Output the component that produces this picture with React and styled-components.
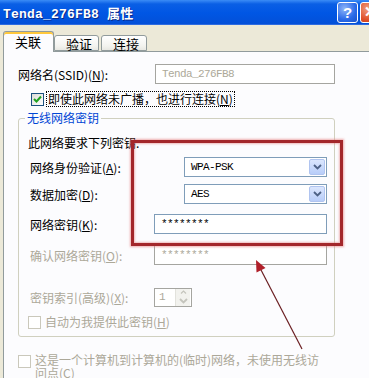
import React from 'react';
import styled, { createGlobalStyle } from 'styled-components';

const GlobalStyle = createGlobalStyle`
  html, body {
    margin: 0;
    padding: 0;
    background: #ece9d8;
    overflow: hidden;
  }
  body {
    font-family: "Noto Sans CJK SC", sans-serif;
    font-size: 12px;
    color: #000;
  }
`;

const Window = styled.div`
  position: relative;
  width: 382px;
  height: 378px;
  background: #ece9d8;
  overflow: hidden;
`;

const TitleBar = styled.div`
  height: 25px;
  display: flex;
  align-items: center;
  justify-content: space-between;
  background: linear-gradient(#3b8cf6 0, #0a5fe5 4px, #0056e4 55%, #0350d8 100%);
  border-bottom: 1px solid #2d6be0;
  box-sizing: border-box;
  padding-left: 3px;
`;

const Title = styled.div`
  color: #fff;
  font-weight: bold;
  font-size: 13px;
  font-family: "Liberation Mono", "Noto Sans CJK SC", monospace;
  text-shadow: 1px 1px 0 #0a2a8a;
  letter-spacing: 0.2px;
`;

const Caption = styled.div`
  display: flex;
  gap: 2px;
  margin-right: 1px;
`;

const CapButton = styled.div`
  width: 19px;
  height: 19px;
  border: 1px solid #fff;
  border-radius: 3px;
  display: flex;
  align-items: center;
  justify-content: center;
  color: #fff;
  font-weight: bold;
  font-size: 15px;
  font-family: "Liberation Sans", sans-serif;
  background: ${p => p.$close
    ? 'radial-gradient(circle at 35% 30%, #f0a080, #e0502a 60%, #c23a12)'
    : 'radial-gradient(circle at 35% 30%, #8fb6f8, #2a6ae8 60%, #1a52c8)'};
`;

const Body = styled.div`
  padding: 0 0 0 3px;
`;

const Tabs = styled.div`
  height: 26px;
  display: flex;
  align-items: flex-end;
`;

const Tab = styled.div`
  position: relative;
  z-index: ${p => (p.$active ? 2 : 1)};
  box-sizing: border-box;
  width: ${p => p.$w}px;
  margin-left: ${p => p.$ml || 0}px;
  height: ${p => (p.$active ? 21 : 16)}px;
  margin-bottom: ${p => (p.$active ? -1 : 0)}px;
  border: 1px solid #919b9c;
  border-bottom: ${p => (p.$active ? 'none' : '1px solid #919b9c')};
  border-radius: 3px 3px 0 0;
  background: ${p => (p.$active ? '#fcfcfe' : 'linear-gradient(#fff, #f3f3ef 70%, #e8e8e2)')};
  box-shadow: ${p => (p.$active ? 'inset 0 2px 0 #ffc83c' : 'none')};
  padding: ${p => (p.$active ? '2px 0 0 11px' : '0 0 0 11px')};
  font-size: 13px;
  line-height: 15px;
`;

const Panel = styled.div`
  border: 1px solid #919b9c;
  border-right: none;
  background: #fcfcfe;
  height: 330px;
  padding: 0 0 0 14px;
`;

const Row = styled.div`
  display: flex;
  align-items: center;
  height: ${p => p.$h || 20}px;
  margin-top: ${p => p.$mt || 0}px;
  margin-left: ${p => p.$ml || 0}px;
`;

const Label = styled.div`
  width: ${p => p.$w}px;
  flex: none;
  white-space: nowrap;
  color: ${p => (p.$disabled ? '#aca899' : '#000')};
`;

const Field = styled.div`
  width: 173px;
  display: flex;
  justify-content: flex-end;
`;

const TextBox = styled.div`
  box-sizing: border-box;
  width: ${p => p.$w}px;
  height: ${p => p.$h || 20}px;
  border: 1px solid ${p => (p.$disabled ? '#a5a5a0' : '#7f9db9')};
  background: #fff;
  padding-left: ${p => p.$pl || 6}px;
  padding-right: 1px;
  display: flex;
  align-items: center;
  justify-content: ${p => (p.$split ? 'space-between' : 'flex-start')};
  font-family: "Liberation Mono", monospace;
  font-size: 11px;
  letter-spacing: -0.6px;
  color: ${p => (p.$disabled ? '#aca899' : '#000')};
`;

const DropButton = styled.div`
  width: 16px;
  height: 16px;
  border-radius: 2px;
  background: linear-gradient(#dbe6fd, #b8cdf9);
  border: 1px solid #b0c4f0;
  box-sizing: border-box;
  display: flex;
  align-items: center;
  justify-content: center;
`;

const Spinner = styled.div`
  width: 14px;
  height: 17px;
  display: flex;
  flex-direction: column;
  justify-content: space-around;
  align-items: center;
  background: #f2f2ee;
  border-left: 1px solid #e2e2dc;
`;

const Check = styled.div`
  width: 13px;
  height: 13px;
  flex: none;
  box-sizing: border-box;
  border: 1px solid ${p => (p.$disabled ? '#cac8bb' : '#1c5180')};
  background: ${p => (p.$disabled ? '#fff' : 'linear-gradient(135deg, #dcdcd7, #fff)')};
  margin-left: ${p => p.$ml || 0}px;
  margin-top: ${p => p.$mt || 0}px;
  display: flex;
  align-items: center;
  justify-content: center;
`;

const CheckText = styled.div`
  margin-left: 2px;
  padding: 0 1px;
  line-height: ${p => p.$lh || 14}px;
  border: 1px dotted ${p => (p.$focus ? '#000' : 'transparent')};
  color: ${p => (p.$disabled ? '#aca899' : '#000')};
  width: ${p => (p.$w ? `${p.$w}px` : 'auto')};
  white-space: ${p => (p.$w ? 'normal' : 'nowrap')};
`;

const Group = styled.fieldset`
  box-sizing: border-box;
  width: 317px;
  margin: 4px 0 0;
  padding: 0 0 6px 6px;
  border: 1px solid #d0d0bf;
  border-radius: 3px;
`;

const Legend = styled.legend`
  padding: 0 2px;
  color: #0046d5;
  line-height: 14px;
`;

const Note = styled.div`
  margin: 10px 0 0 3px;
  line-height: 16px;
`;

const BottomRow = styled.div`
  display: flex;
  align-items: flex-start;
  margin-top: 15px;
`;

const Highlight = styled.div`
  position: absolute;
  left: 131px;
  top: 140px;
  width: 212px;
  height: 106px;
  box-sizing: border-box;
  border: 3px solid #a3272b;
  box-shadow: 0 0 2px 1px rgba(230, 120, 120, 0.6), inset 0 0 2px 1px rgba(230, 120, 120, 0.5);
  pointer-events: none;
`;

const Overlay = styled.svg`
  position: absolute;
  left: 0;
  top: 0;
  pointer-events: none;
`;

const Chevron = ({ color = '#4d6185' }) => (
  <svg width="9" height="6" viewBox="0 0 9 6">
    <path d="M1 1 L4.5 4.5 L8 1" fill="none" stroke={color} strokeWidth="1.8" />
  </svg>
);

const Tick = () => (
  <svg width="9" height="9" viewBox="0 0 9 9">
    <path d="M1 4 L3.5 6.5 L8 1.5" fill="none" stroke="#21a121" strokeWidth="2" />
  </svg>
);

export default function App() {
  return (
    <Window>
      <GlobalStyle />
      <TitleBar>
        <Title>Tenda_276FB8 属性</Title>
        <Caption>
          <CapButton>?</CapButton>
          <CapButton $close>✕</CapButton>
        </Caption>
      </TitleBar>
      <Body>
        <Tabs>
          <Tab $active $w={51}>关联</Tab>
          <Tab $w={45}>验证</Tab>
          <Tab $w={46} $ml={2}>连接</Tab>
        </Tabs>
        <Panel>
          <Row $mt={12}>
            <Label $w={137}>网络名(SSID)(<u>N</u>):</Label>
            <TextBox $w={180} $disabled>Tenda_276FB8</TextBox>
          </Row>
          <Row $mt={7} $h={16}>
            <Check $ml={13}><Tick /></Check>
            <CheckText $focus>即使此网络未广播，也进行连接(<u>N</u>)</CheckText>
          </Row>
          <Group>
            <Legend>无线网络密钥</Legend>
            <Note>此网络要求下列密钥:</Note>
            <Row $mt={6} $ml={5}>
              <Label $w={124}>网络身份验证(<u>A</u>):</Label>
              <Field>
                <TextBox $w={143} $split>WPA-PSK<DropButton><Chevron /></DropButton></TextBox>
              </Field>
            </Row>
            <Row $mt={7} $ml={5}>
              <Label $w={124}>数据加密(<u>D</u>):</Label>
              <Field>
                <TextBox $w={143} $split>AES<DropButton><Chevron /></DropButton></TextBox>
              </Field>
            </Row>
            <Row $mt={10} $ml={5}>
              <Label $w={124}>网络密钥(<u>K</u>):</Label>
              <Field>
                <TextBox $w={173}>********</TextBox>
              </Field>
            </Row>
            <Row $mt={11} $ml={5}>
              <Label $w={124} $disabled>确认网络密钥(<u>O</u>):</Label>
              <Field>
                <TextBox $w={173} $disabled>********</TextBox>
              </Field>
            </Row>
            <Row $mt={22} $ml={5}>
              <Label $w={124} $disabled>密钥索引(高级)(<u>X</u>):</Label>
              <TextBox $w={38} $h={19} $pl={4} $disabled $split>
                1
                <Spinner>
                  <svg width="7" height="4" viewBox="0 0 7 4"><path d="M1 3.5 L3.5 1 L6 3.5" fill="none" stroke="#c4c4bc" strokeWidth="1.2" /></svg>
                  <Chevron color="#c4c4bc" />
                </Spinner>
              </TextBox>
            </Row>
            <Row $mt={7} $h={16} $ml={3}>
              <Check $disabled />
              <CheckText $disabled>自动为我提供此密钥(<u>H</u>)</CheckText>
            </Row>
          </Group>
          <BottomRow>
            <Check $disabled $mt={3} />
            <CheckText $disabled $w={292} $lh={13}>这是一个计算机到计算机的(临时)网络，未使用无线访问点(<u>C</u>)</CheckText>
          </BottomRow>
        </Panel>
      </Body>
      <Highlight />
      <Overlay width="369" height="378" viewBox="0 0 369 378">
        <line x1="302" y1="349" x2="260" y2="268" stroke="#6b1f22" strokeWidth="1.2" />
        <polygon points="256,260 256.5,272.5 265.5,268" fill="#b0202a" />
      </Overlay>
    </Window>
  );
}
